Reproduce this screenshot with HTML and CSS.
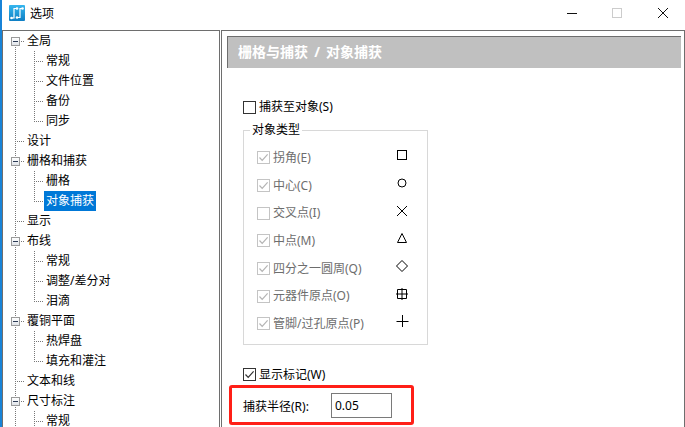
FILE: index.html
```html
<!DOCTYPE html>
<html lang="zh-CN">
<head>
    <meta charset="UTF-8">
    <title>选项</title>
    <link rel="stylesheet" href="styles.css">
</head>
<body>
    <svg class="defs" width="0" height="0">
        <symbol id="tick" viewBox="0 0 13 13">
            <path d="M2.5 6.5 L5.2 9.4 L10.6 3.4" fill="none" stroke="currentColor" stroke-width="1.2"/>
        </symbol>
    </svg>

    <div class="window">
        <div class="titlebar">
            <svg class="app-icon" width="16" height="16" viewBox="0 0 16 16">
                <defs>
                    <linearGradient id="tile" x1="0" y1="0" x2="0" y2="1">
                        <stop offset="0" stop-color="#35b6ee"/>
                        <stop offset="1" stop-color="#0f7fc4"/>
                    </linearGradient>
                </defs>
                <rect width="16" height="16" rx="1" fill="url(#tile)"/>
                <path d="M2.5 13 H5 V3.5 H8" fill="none" stroke="#fff" stroke-width="1.2"/>
                <path d="M8 12.5 H11 V3.5 H13.5" fill="none" stroke="#fff" stroke-width="1.2"/>
                <circle cx="2.5" cy="13" r="1.3" fill="#fff"/>
                <circle cx="8" cy="3.5" r="1.3" fill="#fff"/>
                <circle cx="8" cy="12.5" r="1.3" fill="#fff"/>
                <circle cx="13.5" cy="3.5" r="1.3" fill="#fff"/>
            </svg>
            <span class="title">选项</span>
            <div class="controls">
                <svg width="46" height="30" viewBox="0 0 46 30"><path d="M20 13.5 H30" stroke="#111" fill="none"/></svg>
                <svg width="46" height="30" viewBox="0 0 46 30"><rect x="19.5" y="8.5" width="9" height="9" stroke="#ccc" fill="none"/></svg>
                <svg width="46" height="30" viewBox="0 0 46 30"><path d="M19 8 L29 18 M29 8 L19 18" stroke="#111" fill="none"/></svg>
            </div>
        </div>

        <div class="panes">
            <div class="tree">
                <div class="node"><span class="twig first"><i class="expander"></i></span><span class="label">全局</span></div>
                <div class="node"><span class="pass"></span><span class="twig start"></span><span class="label">常规</span></div>
                <div class="node"><span class="pass"></span><span class="twig"></span><span class="label">文件位置</span></div>
                <div class="node"><span class="pass"></span><span class="twig"></span><span class="label">备份</span></div>
                <div class="node"><span class="pass"></span><span class="twig last"></span><span class="label">同步</span></div>
                <div class="node"><span class="twig"></span><span class="label">设计</span></div>
                <div class="node"><span class="twig"><i class="expander"></i></span><span class="label">栅格和捕获</span></div>
                <div class="node"><span class="pass"></span><span class="twig start"></span><span class="label">栅格</span></div>
                <div class="node"><span class="pass"></span><span class="twig last"></span><span class="label selected">对象捕获</span></div>
                <div class="node"><span class="twig"></span><span class="label">显示</span></div>
                <div class="node"><span class="twig"><i class="expander"></i></span><span class="label">布线</span></div>
                <div class="node"><span class="pass"></span><span class="twig start"></span><span class="label">常规</span></div>
                <div class="node"><span class="pass"></span><span class="twig"></span><span class="label">调整/差分对</span></div>
                <div class="node"><span class="pass"></span><span class="twig last"></span><span class="label">泪滴</span></div>
                <div class="node"><span class="twig"><i class="expander"></i></span><span class="label">覆铜平面</span></div>
                <div class="node"><span class="pass"></span><span class="twig start"></span><span class="label">热焊盘</span></div>
                <div class="node"><span class="pass"></span><span class="twig last"></span><span class="label">填充和灌注</span></div>
                <div class="node"><span class="twig"></span><span class="label">文本和线</span></div>
                <div class="node"><span class="twig"><i class="expander"></i></span><span class="label">尺寸标注</span></div>
                <div class="node"><span class="pass"></span><span class="twig start"></span><span class="label">常规</span></div>
            </div>

            <div class="content">
                <div class="heading">栅格与捕获 / 对象捕获</div>
                <div class="form">
                    <div class="check-row snap-row">
                        <span class="box"></span>
                        <span>捕获至对象(S)</span>
                    </div>

                    <fieldset class="group">
                        <legend>对象类型</legend>
                        <div class="type-row">
                            <div class="check-row"><span class="box off"><svg><use href="#tick"/></svg></span><span>拐角(E)</span></div>
                            <svg class="marker" viewBox="0 0 16 16"><rect x="3.5" y="3.5" width="9" height="9"/></svg>
                        </div>
                        <div class="type-row">
                            <div class="check-row"><span class="box off"><svg><use href="#tick"/></svg></span><span>中心(C)</span></div>
                            <svg class="marker" viewBox="0 0 16 16"><circle cx="8" cy="8" r="4"/></svg>
                        </div>
                        <div class="type-row">
                            <div class="check-row"><span class="box off"></span><span>交叉点(I)</span></div>
                            <svg class="marker" viewBox="0 0 16 16"><path d="M3 3 L13 13 M13 3 L3 13"/></svg>
                        </div>
                        <div class="type-row">
                            <div class="check-row"><span class="box off"><svg><use href="#tick"/></svg></span><span>中点(M)</span></div>
                            <svg class="marker" viewBox="0 0 16 16"><path d="M8 3.5 L12.5 12.5 H3.5 Z"/></svg>
                        </div>
                        <div class="type-row">
                            <div class="check-row"><span class="box off"><svg><use href="#tick"/></svg></span><span>四分之一圆周(Q)</span></div>
                            <svg class="marker" viewBox="0 0 16 16"><path d="M8 2.5 L13.5 8 L8 13.5 L2.5 8 Z"/></svg>
                        </div>
                        <div class="type-row">
                            <div class="check-row"><span class="box off"><svg><use href="#tick"/></svg></span><span>元器件原点(O)</span></div>
                            <svg class="marker" viewBox="0 0 16 16"><path d="M3.5 3.5 H12.5 V12.5 H3.5 Z M8 2 V14 M2 8 H14"/></svg>
                        </div>
                        <div class="type-row">
                            <div class="check-row"><span class="box off"><svg><use href="#tick"/></svg></span><span>管脚/过孔原点(P)</span></div>
                            <svg class="marker" viewBox="0 0 16 16"><path d="M8.5 2 V14 M2.5 8.5 H14.5"/></svg>
                        </div>
                    </fieldset>

                    <div class="check-row show-row">
                        <span class="box"><svg><use href="#tick"/></svg></span>
                        <span>显示标记(W)</span>
                    </div>

                    <div class="radius-row">
                        <label for="radius">捕获半径(R):</label>
                        <input id="radius" type="text" value="0.05">
                    </div>
                </div>
            </div>
        </div>
    </div>
</body>
</html>
```

FILE: styles.css
```css
* {
    box-sizing: border-box;
}

html, body {
    margin: 0;
    height: 100%;
    overflow: hidden;
    background-color: white;
}

body {
    font-family: "Noto Sans", "Noto Sans CJK SC", sans-serif;
    font-size: 12px;
    color: #000;
}

.defs {
    display: block;
    height: 0;
}

.window {
    display: flex;
    flex-direction: column;
    height: 427px;
    border-left: 2px solid #1883d7;
}

/* Title bar */
.titlebar {
    display: flex;
    align-items: flex-start;
    height: 30px;
    flex: none;
    padding-left: 7px;
}

.app-icon {
    margin-top: 5px;
}

.title {
    margin-left: 5px;
    line-height: 27px;
}

.controls {
    display: flex;
    margin-left: auto;
}

/* Panes */
.panes {
    display: flex;
    flex: 1;
    min-height: 0;
    gap: 1px;
}

.tree {
    width: 218px;
    flex: none;
    border: 1px solid #6e6e6e;
    border-bottom: none;
    padding-left: 12px;
    overflow: hidden;
}

.node {
    display: flex;
    height: 20px;
}

.pass,
.twig {
    display: block;
    flex: none;
    height: 20px;
    background-repeat: no-repeat;
}

.pass {
    width: 19px;
    background-image: repeating-linear-gradient(to bottom, #777 0 1px, transparent 1px 2px);
    background-size: 1px 100%;
}

.twig {
    position: relative;
    width: 10px;
    background-image:
        repeating-linear-gradient(to bottom, #777 0 1px, transparent 1px 2px),
        repeating-linear-gradient(to right, #777 0 1px, transparent 1px 2px);
    background-size: 1px 100%, 100% 1px;
    background-position: 0 0, 0 10px;
}

.twig.first {
    background-size: 1px 10px, 100% 1px;
    background-position: 0 10px, 0 10px;
}

.twig.last {
    background-size: 1px 11px, 100% 1px;
}

.expander {
    position: absolute;
    left: -4px;
    top: 6px;
    width: 9px;
    height: 9px;
    border: 1px solid #9a9a9a;
    background: linear-gradient(#fff, #dfe3e8);
}

.expander::after {
    content: "";
    display: block;
    width: 5px;
    height: 1px;
    margin: 3px 1px;
    background-color: #2b3a55;
}

.label {
    height: 20px;
    padding: 0 2px;
    line-height: 20px;
    white-space: nowrap;
}

.label.selected {
    background-color: #0078d7;
    color: white;
}

.content {
    flex: 1;
    min-width: 0;
    border: 1px solid #6e6e6e;
    border-bottom: none;
    padding: 5px 3px 0 5px;
}

.heading {
    height: 32px;
    padding-left: 10px;
    background-color: #c0c0c0;
    border-top: 1px solid #6e6e6e;
    border-left: 1px solid #6e6e6e;
    color: white;
    font-size: 14px;
    font-weight: bold;
    line-height: 30px;
    word-spacing: 2.5px;
}

.form {
    padding-left: 16px;
}

/* Checkboxes */
.check-row {
    display: flex;
    align-items: center;
    gap: 3px;
    height: 14px;
    line-height: 14px;
    white-space: nowrap;
}

.box {
    display: block;
    flex: none;
    width: 13px;
    height: 13px;
    border: 1px solid #333;
    color: #333;
}

.box svg {
    display: block;
    width: 13px;
    height: 13px;
    margin: -1px;
}

.box.off {
    border-color: #c4c4c4;
    color: #b4b4b4;
}

.snap-row {
    margin-top: 32px;
}

.show-row {
    margin-top: 23px;
}

/* Object types */
.group {
    width: 185px;
    margin: 8px 0 0;
    padding: 6px 0 6px 13px;
    border: 1px solid #d8d8d8;
    color: #6d6d6d;
}

.group legend {
    margin-left: -7px;
    padding: 0 2px;
    line-height: 16px;
    color: #000;
}

.type-row {
    display: grid;
    grid-template-columns: 137px 16px;
    align-items: center;
    height: 27.7px;
}

.marker {
    display: block;
    width: 16px;
    height: 16px;
    margin-top: -5px;
    fill: none;
    stroke: #000;
}

/* Snap radius, with the red mark round it */
.radius-row {
    display: flex;
    align-items: center;
    width: 185px;
    height: 40px;
    margin: 3px 0 0 -14px;
    padding-left: 11px;
    border: 3px solid #ff1f17;
    border-radius: 3px;
}

.radius-row label {
    width: 88px;
    flex: none;
    margin-top: 2px;
}

.radius-row input {
    width: 61px;
    height: 25px;
    margin-top: 1px;
    padding: 0 3px;
    border: 1px solid #7a7a7a;
    font: inherit;
    color: #000;
    outline: none;
}
```
